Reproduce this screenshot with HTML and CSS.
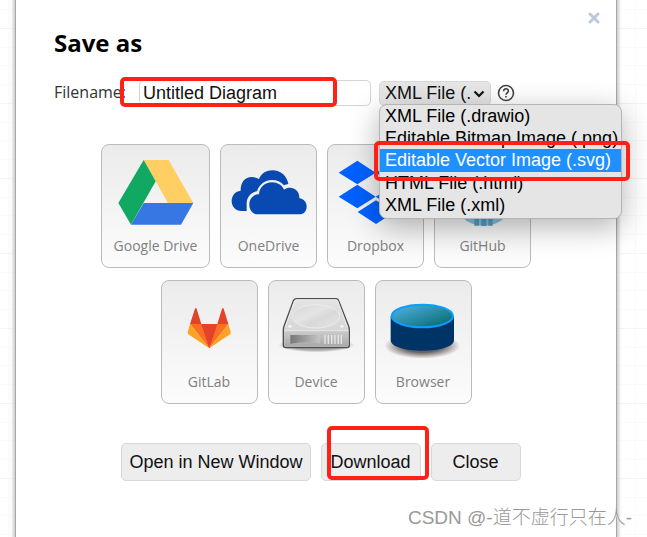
FILE: index.html
```html
<!DOCTYPE html>
<html lang="en">
<head>
<meta charset="utf-8">
<title>Save as</title>
<link rel="stylesheet" href="styles.css">
</head>
<body>
<main class="dialog">
  <button class="dismiss" type="button" aria-label="Dismiss">
    <svg viewBox="0 0 12 12" width="12" height="12"><path d="M2 2 10 10M10 2 2 10" stroke="#b9c9de" stroke-width="3" stroke-linecap="round"/></svg>
  </button>
  <h1>Save as</h1>
  <form class="file-row">
    <label for="filename">Filename:</label>
    <input class="filename" id="filename" type="text" value="Untitled Diagram">
    <div class="format">
      <select class="format-select" aria-label="File format">
        <option>XML File (.drawio)</option>
        <option>Editable Bitmap Image (.png)</option>
        <option>Editable Vector Image (.svg)</option>
        <option>HTML File (.html)</option>
        <option>XML File (.xml)</option>
      </select>
      <svg class="chevron" viewBox="0 0 12 8" width="12" height="8"><path d="M1.500 1.500 6 6 10.500 1.500" fill="none" stroke="#111" stroke-width="2.200"/></svg>
      <ul class="menu">
        <li>XML File (.drawio)</li>
        <li>Editable Bitmap Image (.png)</li>
        <li class="selected">Editable Vector Image (.svg)</li>
        <li>HTML File (.html)</li>
        <li>XML File (.xml)</li>
      </ul>
      <span class="mark mark-menu"></span>
    </div>
    <button class="help" type="button" aria-label="Help">
      <svg viewBox="0 0 18 18" width="18" height="18" fill="none" stroke="#444"><circle cx="9" cy="9" r="7.500" stroke-width="1.600"/><path d="M6.600 7.300C6.600 4 11.400 4 11.400 7C11.400 8.800 9 8.900 9 10.800M9 12V13.600" stroke-width="1.600"/></svg>
    </button>
    <span class="mark mark-name"></span>
  </form>

  <div class="places">
    <button class="place place-wide" type="button">
      <svg class="icon" viewBox="68 15 228 252">
        <path fill="#ffcf63" d="M145 60H220L294 189H218Z"/>
        <path fill="#11a861" d="M145 60 181 124 107 254 69 189Z"/>
        <path fill="#3777e3" d="M145 189H294L257 254H107Z"/>
      </svg>
      <span>Google Drive</span>
    </button>
    <button class="place" type="button">
      <svg class="icon" viewBox="406 15 228 252">
        <path fill="#094ab2" d="M453 213H438C419 213 408 199 408 183C408 166 419 154 435 152C434 128 448 111 468 111C476 111 484 113 490 117C498 99 513 91 530 91C555 91 574 108 578 132C573 133 569 134 565 136C556 125 543 120 529 120C508 120 491 133 484 154C464 157 453 173 453 191C453 199 453 207 453 213Z"/>
        <path fill="#094ab2" d="M487 223C471 223 461 210 461 194C461 176 473 163 490 163C491 142 507 127 529 127C546 127 559 136 565 149C586 134 613 149 611 175C625 177 633 187 633 200C633 213 624 223 611 223Z"/>
      </svg>
      <span>OneDrive</span>
    </button>
    <button class="place" type="button">
      <svg class="icon" viewBox="52 15 228 252">
        <path fill="#0061ff" d="M110 62 165 98 110 133 54 98ZM222 62 278 98 222 133 165 98ZM110 134 165 170 110 205 54 170ZM222 134 278 170 222 205 165 170ZM166 181 222 216 166 252 111 216Z"/>
      </svg>
      <span>Dropbox</span>
    </button>
    <button class="place" type="button">
      <svg class="icon" viewBox="373 15 228 252">
        <ellipse cx="489" cy="160" rx="94" ry="98" fill="#86c2dc"/>
        <path fill="#559cc0" d="M461 257V218Q489 208 516 218V257H503V236H497V258H482V236H475V257Z"/>
      </svg>
      <span>GitHub</span>
    </button>
    <button class="place" type="button">
      <svg class="icon" viewBox="49 18 228 252">
        <path fill="#fc6d26" d="M106 147H221L164 220Z"/>
        <path fill="#fca326" d="M106 147 99 171Q98 175 101 178L164 220ZM221 147 228 171Q229 175 226 178L164 220Z"/>
        <path fill="#e24329" d="M140 147H188L164 220ZM106 147 121 101Q123 97 126 101L140 147ZM188 147 202 101Q205 97 207 101L221 147Z"/>
      </svg>
      <span>GitLab</span>
    </button>
    <button class="place" type="button">
      <svg class="icon" viewBox="370 18 228 252">
        <defs>
          <linearGradient id="top" x1="0" y1="0" x2="0" y2="1"><stop stop-color="#e4e4e4"/><stop offset="1" stop-color="#cfcfcf"/></linearGradient>
          <linearGradient id="plate" x1="0" y1="0" x2="1" y2="1"><stop stop-color="#d6d6d6"/><stop offset=".4" stop-color="#e4e4e4"/><stop offset=".6" stop-color="#d8d8d8"/><stop offset="1" stop-color="#e6e6e6"/></linearGradient>
          <linearGradient id="front" x1="0" y1="0" x2="0" y2="1"><stop stop-color="#cdcdcd"/><stop offset="1" stop-color="#a8a8a8"/></linearGradient>
          <linearGradient id="slot"><stop stop-color="#777"/><stop offset="1" stop-color="#c4c4c4"/></linearGradient>
          <radialGradient id="under"><stop offset=".7" stop-color="#777" stop-opacity=".6"/><stop offset="1" stop-color="#777" stop-opacity="0"/></radialGradient>
        </defs>
        <ellipse cx="485" cy="210" rx="114" ry="22" fill="url(#under)"/>
        <path d="M427 71H544Q550 71 552 77L582 154Q584 159 584 165V210Q584 218 576 218H394Q386 218 386 210V165Q386 159 388 154L416 77Q419 71 427 71Z" fill="url(#top)" stroke="#4d4d4d" stroke-width="4"/>
        <path d="M389 166H581V209Q581 215 575 215H395Q389 215 389 209Z" fill="url(#front)"/>
        <path d="M389 167H581M391 158 419 79Q421 74 427 74H544Q548 74 550 79L579 158" fill="none" stroke="#f4f4f4" stroke-width="2"/>
        <ellipse cx="484" cy="124" rx="71" ry="35" fill="url(#plate)" stroke="#ebebeb" stroke-width="3"/>
        <circle cx="406" cy="154" r="5" fill="#f2f2f2"/><circle cx="562" cy="154" r="5" fill="#f2f2f2"/>
        <path fill="url(#slot)" d="M407 180H495V206Q470 198 407 206Z"/>
        <path d="M511 180V207M521 180V207M531 180V207M541 180V207M551 180V207M560 180V207" stroke="#e6e6e6" stroke-width="4"/>
      </svg>
      <span>Device</span>
    </button>
    <button class="place" type="button">
      <svg class="icon" viewBox="196 18 228 252">
        <defs>
          <linearGradient id="disc" x1="0" y1="0" x2="1" y2="1"><stop stop-color="#55b5e5"/><stop offset="1" stop-color="#006468"/></linearGradient>
          <radialGradient id="ground"><stop offset=".5" stop-color="#443c3c" stop-opacity=".8"/><stop offset="1" stop-color="#443c3c" stop-opacity="0"/></radialGradient>
        </defs>
        <ellipse cx="308" cy="213" rx="114" ry="38" fill="url(#ground)"/>
        <path fill="#036" d="M213 123V195C213 238 403 238 403 195V123Z"/>
        <ellipse cx="308" cy="123" rx="92" ry="34" fill="url(#disc)" stroke="#0a9eff" stroke-width="6"/>
      </svg>
      <span>Browser</span>
    </button>
  </div>

  <div class="actions">
    <button class="action" type="button">Open in New Window</button>
    <button class="action action-download" type="button">Download<span class="mark mark-download"></span></button>
    <button class="action action-close" type="button">Close</button>
  </div>
</main>
<div class="watermark">CSDN @-道不虚行只在人-</div>
</body>
</html>
```
FILE: styles.css
```css
* {
  box-sizing: border-box;
}

body {
  margin: 0;
  min-height: 100vh;
  display: flex;
  overflow: hidden;
  font-family: "Open Sans", "Noto Sans", sans-serif;
  background-color: #fff;
  background-image:
    linear-gradient(#f4f4f4 1px, transparent 1px, transparent 19px, #fafafa 19px, #fafafa 20px, transparent 20px, transparent 37px, #fafafa 37px, #fafafa 38px, transparent 38px, transparent 56px, #fafafa 56px, #fafafa 57px, transparent 57px),
    linear-gradient(90deg, #fafafa 1px, transparent 1px);
  background-size: 75px 75px, 19px 19px;
  background-position: 0 28px, 8px 0;
}

.dialog {
  position: relative;
  flex: 1;
  margin: 0 30px 0 15px;
  padding: 27px 38px 0;
  background: #fff;
  border: solid #a6a6a6;
  border-width: 0 1px;
  box-shadow: 0 0 3px 2px #ccc;
}

button,
input,
select {
  margin: 0;
  font-family: "Liberation Sans", Arial, sans-serif;
  font-size: 18px;
  color: #111;
}

.dismiss,
.help {
  display: flex;
  padding: 0;
  border: 0;
  background: none;
}

.dismiss {
  position: absolute;
  top: 12px;
  right: 16px;
}

h1 {
  margin: 0;
  font-size: 24px;
  line-height: 32px;
  color: #000;
}

.file-row {
  position: relative;
  display: flex;
  align-items: center;
  gap: 6px;
  margin-top: 21px;
  height: 26px;
  font-size: 16px;
  color: #333;
}

.file-row label {
  width: 79px;
  padding-bottom: 2px;
}

.filename {
  width: 232px;
  height: 26px;
  padding: 0 3px;
  border: 1px solid #d4d4d4;
  border-radius: 5px;
}

.format {
  position: relative;
  width: 112px;
  margin-left: 2px;
}

.format-select {
  display: block;
  width: 100%;
  height: 25px;
  padding: 0 19px 0 5px;
  border: 1px solid #d8d8d8;
  border-radius: 5px;
  background: #e6e6e6;
  appearance: none;
}

.chevron {
  position: absolute;
  top: 9px;
  right: 6px;
}

.menu {
  position: absolute;
  z-index: 1;
  top: 23px;
  left: 0;
  width: 243px;
  margin: 0;
  padding: 0 0 2px;
  list-style: none;
  border: 1px solid #b5b5b5;
  border-radius: 8px;
  background: #e5e5e5;
  box-shadow: 0 8px 30px rgba(0, 0, 0, 0.3);
  font-family: "Liberation Sans", Arial, sans-serif;
  font-size: 18px;
  line-height: 22px;
  color: #000;
  white-space: nowrap;
}

.menu li {
  padding: 0 5px;
}

.menu .selected {
  line-height: 23px;
  background: #1e90ff;
  color: #fff;
}

.mark {
  position: absolute;
  z-index: 2;
  border: 4px solid #ff2016;
  border-radius: 5px;
  pointer-events: none;
}

.mark-name {
  top: -3px;
  left: 66px;
  width: 217px;
  height: 30px;
}

.mark-menu {
  top: 60px;
  left: -5px;
  width: 256px;
  height: 40px;
}

.mark-download {
  top: -18px;
  left: 5px;
  width: 102px;
  height: 54px;
}

.places {
  display: flex;
  flex-wrap: wrap;
  justify-content: center;
  gap: 12px 10px;
  max-width: 450px;
  margin: 38px auto 0;
}

.place {
  display: flex;
  flex-direction: column;
  align-items: center;
  min-width: 97px;
  height: 124px;
  padding: 0 9px;
  border: 1px solid #bbb;
  border-radius: 8px;
  background: linear-gradient(#ebebeb, #fcfcfc);
  font-family: "Open Sans", "Noto Sans", sans-serif;
  font-size: 14px;
  line-height: 34px;
  color: #808080;
}

.place-wide {
  min-width: 109px;
}

.icon {
  width: 76px;
  height: 84px;
}

.actions {
  display: flex;
  justify-content: center;
  gap: 10px;
  margin-top: 39px;
  padding-left: 10px;
}

.action {
  position: relative;
  height: 38px;
  padding: 0 7px;
  border: 1px solid #d8d8d8;
  border-radius: 5px;
  background: #ededed;
}

.action-download {
  min-width: 100px;
}

.action-close {
  min-width: 90px;
}

.watermark {
  position: absolute;
  right: 15px;
  bottom: 5px;
  font-family: "Liberation Sans", "Noto Sans CJK SC", sans-serif;
  font-size: 19px;
  font-weight: 300;
  line-height: 28px;
  color: #999;
  text-shadow: -1px -1px 0 #fff;
}
```
